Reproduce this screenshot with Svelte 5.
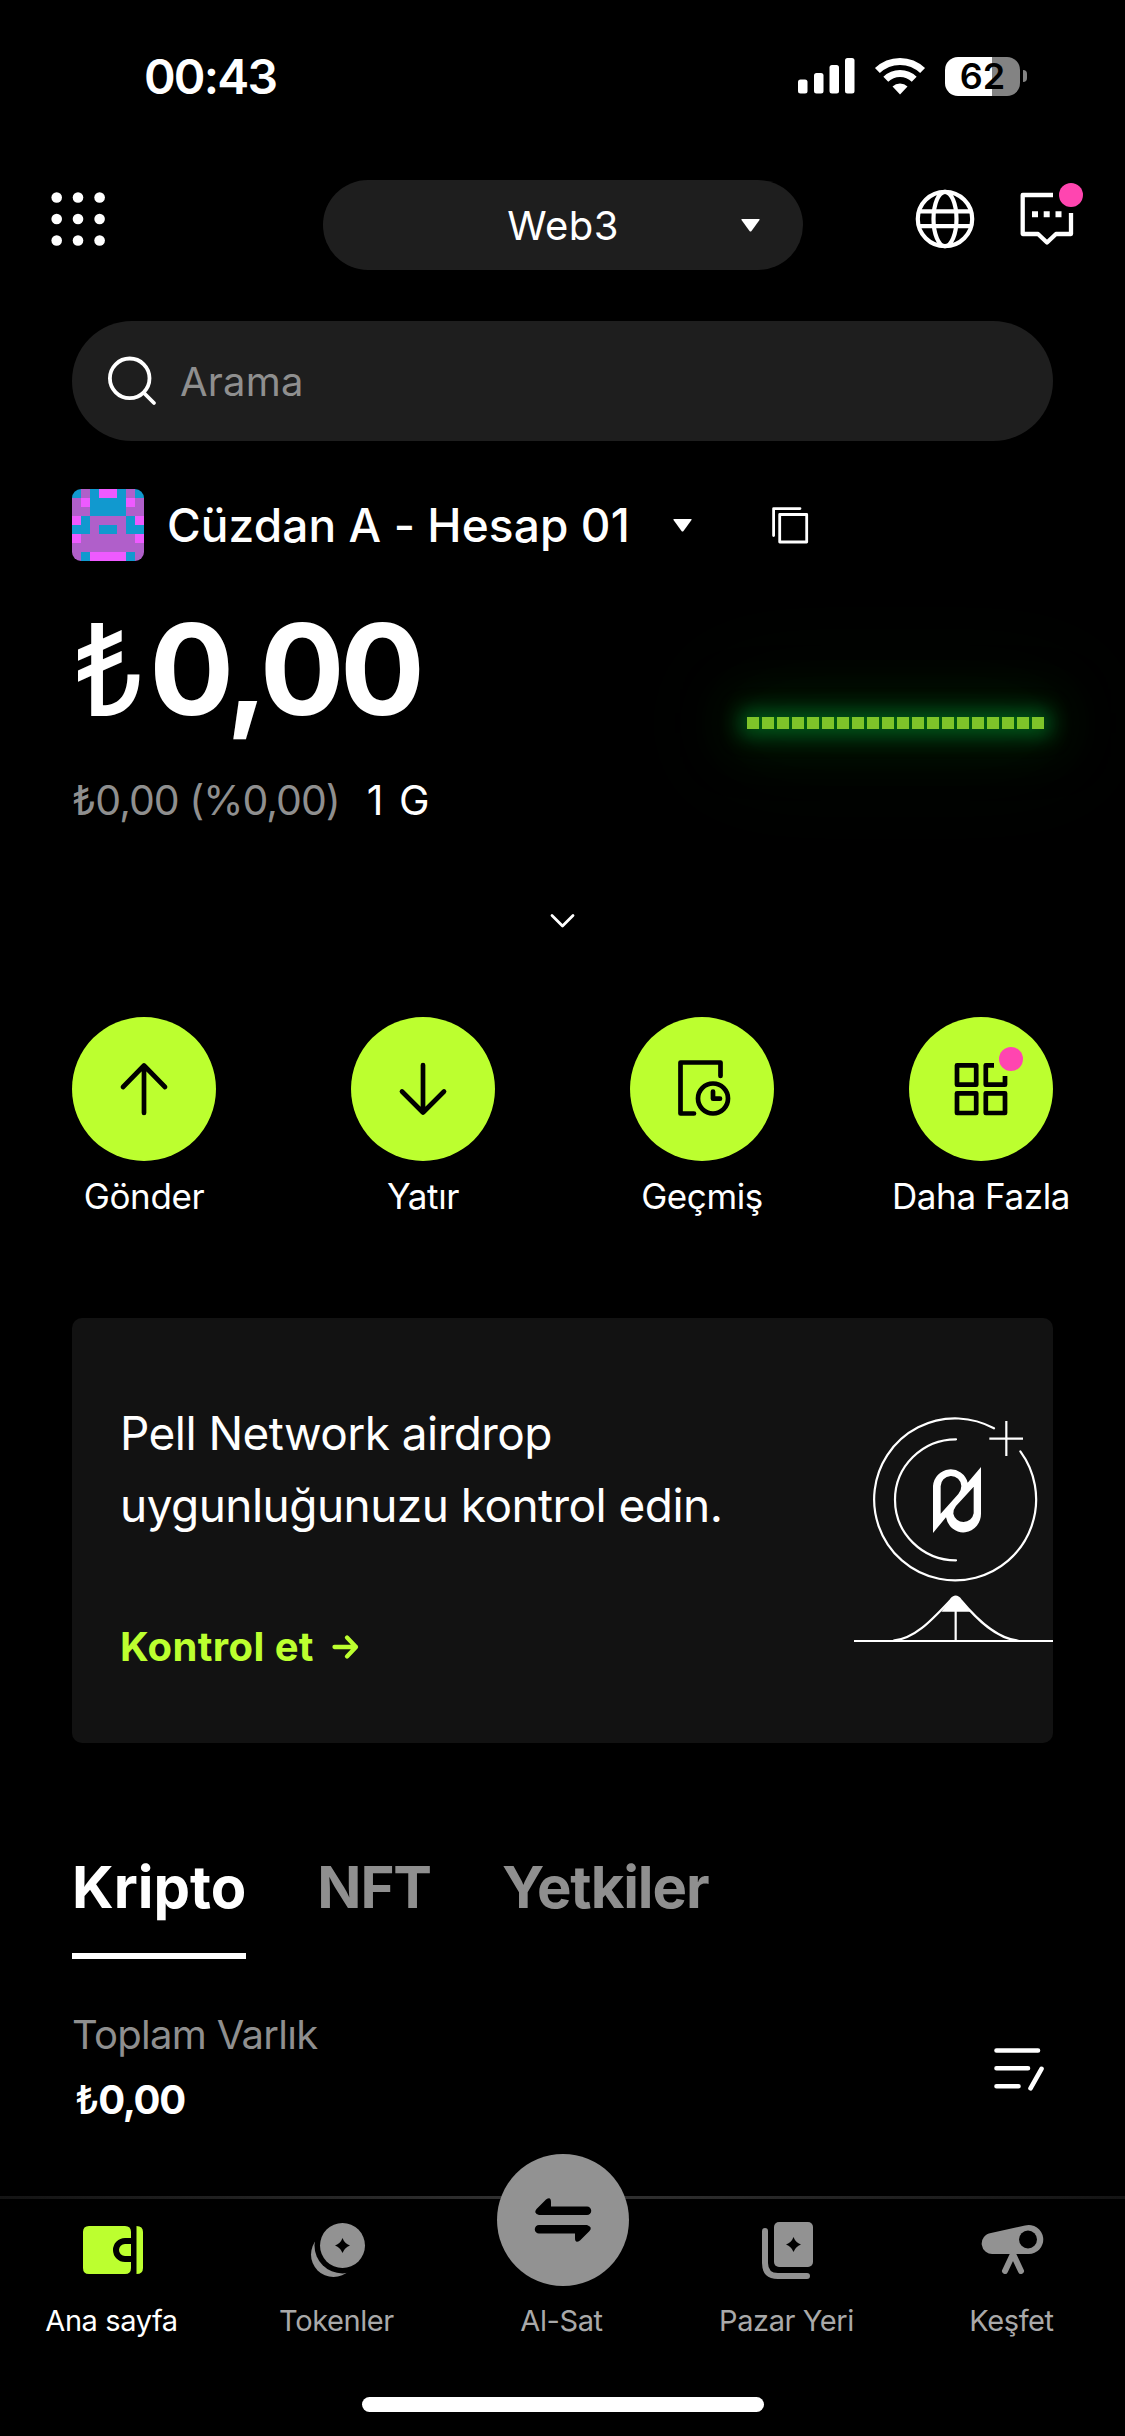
<script lang="ts">
  const avatarRows = [
    'bpbmmbpb',
    'pmbbbbmp',
    'ppbbbbpp',
    'mbppppbm',
    'bbpbbpbb',
    'mppppppm',
    'pppppppp',
    'pbmmmmbp',
  ];
  const avatarColors: Record<string, string> = { b: '#1199cf', p: '#b05fca', m: '#ee5aff' };

  const points = Array.from({ length: 20 }, (_, i) => i);

  const actions = [
    { id: 'send', label: 'Gönder' },
    { id: 'receive', label: 'Yatır' },
    { id: 'history', label: 'Geçmiş' },
    { id: 'more', label: 'Daha Fazla' },
  ];

  const tabs = ['Kripto', 'NFT', 'Yetkiler'];
  let activeTab = $state('Kripto');

  const navItems = [
    { id: 'home', label: 'Ana sayfa' },
    { id: 'tokens', label: 'Tokenler' },
    { id: 'trade', label: 'Al-Sat' },
    { id: 'market', label: 'Pazar Yeri' },
    { id: 'explore', label: 'Keşfet' },
  ];
  let activeNav = $state('home');
</script>

{#snippet caret()}
  <svg class="caret" width="19" height="13" viewBox="0 0 19 13" fill="currentColor">
    <path d="M1 0h17q1 0 .5 1l-8 11q-1 1-2 0l-8-11q-.5-1 .5-1z" />
  </svg>
{/snippet}

{#snippet actionIcon(id: string)}
  <svg width="80" height="80" viewBox="0 0 80 80" fill="none" stroke="#000" stroke-width="4.700" stroke-linecap="round" stroke-linejoin="round">
    {#if id === 'send'}
      <path d="M40 16.500V64M19 38L40 16.500L61 38" />
    {:else if id === 'receive'}
      <path d="M40 16V63.500M19 42.500L40 63.500L61 42.500" />
    {:else if id === 'history'}
      <path d="M58.500 27V13.500H18.500V64.500H32" />
      <circle cx="51" cy="49.500" r="15" />
      <path d="M51 42.500V49.700H58" />
    {:else}
      <path d="M16 16.300H35.200V35.700H16zM16 44.300H35.200V64H16zM44.800 44.300H64V64H44.800z" />
      <path d="M53 16.300H44.800V35.700H64V27" stroke-linecap="butt" />
      <circle cx="70" cy="10" r="12" fill="#ff45b0" stroke="none" />
    {/if}
  </svg>
{/snippet}

{#snippet navIcon(id: string)}
  {#if id === 'home'}
    <svg width="60" height="48" viewBox="0 0 60 48" fill="#bcff2f">
      <path d="M6 0H42Q48 0 48 6V12H42A12 12 0 0 0 42 36H48V42Q48 48 42 48H6Q0 48 0 42V6Q0 0 6 0z" />
      <path d="M48 18V30H42A6 6 0 0 1 42 18zM53.500 0Q60 0 60 6V42Q60 48 53.500 48z" />
    </svg>
  {:else if id === 'tokens'}
    <svg width="54" height="54" viewBox="0 0 54 54" fill="#929292">
      <circle cx="22.500" cy="31.500" r="22.500" />
      <circle cx="31.500" cy="22.500" r="28" fill="#000" />
      <circle cx="31.500" cy="22.500" r="22.500" />
      <path d="M31.500 15Q33.500 20.500 39 22.500Q33.500 24.500 31.500 30Q29.500 24.500 24 22.500Q29.500 20.500 31.500 15z" fill="#000" />
    </svg>
  {:else if id === 'trade'}
    <svg width="56" height="44" viewBox="0 0 56 44" fill="#000">
      <path d="M11 1.500Q16 -2 16 4V8.500H52A4.200 4.200 0 0 1 52 17H4Q-2 15 1.500 11z" />
      <path d="M11 1.500Q16 -2 16 4V8.500H52A4.200 4.200 0 0 1 52 17H4Q-2 15 1.500 11z" transform="rotate(180 28 22)" />
    </svg>
  {:else if id === 'market'}
    <svg width="51" height="57" viewBox="0 0 51 57" fill="#929292">
      <rect x="12" width="39" height="45" rx="5" />
      <path d="M31.500 15Q33.500 20.500 39 22.500Q33.500 24.500 31.500 30Q29.500 24.500 24 22.500Q29.500 20.500 31.500 15z" fill="#000" />
      <path d="M3 9V41Q3 54 16 54H45" fill="none" stroke="#929292" stroke-width="6" stroke-linecap="round" />
    </svg>
  {:else}
    <svg width="60" height="50" viewBox="0 0 60 50" fill="#929292">
      <path d="M10.500 29A10.500 10.500 0 0 1 8 8L42 .5A14.500 14.500 0 1 1 45.500 29z" />
      <circle cx="45" cy="14.500" r="9" fill="#000" />
      <path d="M30 29L22 46M30 29L38 46" stroke="#929292" stroke-width="6" stroke-linecap="round" />
    </svg>
  {/if}
{/snippet}

<div class="screen">
  <div class="status">
    <span class="time">00:43</span>
    <div class="indicators">
      <svg width="57" height="36" viewBox="0 0 57 36" fill="#fff">
        <rect y="21.500" width="9.500" height="14" rx="2.500" />
        <rect x="16" y="15" width="9.500" height="20.500" rx="2.500" />
        <rect x="31.500" y="7" width="9.500" height="28.500" rx="2.500" />
        <rect x="47" width="9.500" height="35.500" rx="2.500" />
      </svg>
      <svg width="52" height="37" viewBox="0 0 52 37" fill="none" stroke="#fff" stroke-width="7">
        <path d="M3.400 12.600A32.500 32.500 0 0 1 48.600 12.600M11.800 21.300A20.400 20.400 0 0 1 40.200 21.300" />
        <path d="M26 36.500L18.500 28.500A11 11 0 0 1 33.500 28.500z" fill="#fff" stroke="none" />
      </svg>
      <div class="battery">
        <span class="battery-body">62</span>
        <span class="battery-cap"></span>
      </div>
    </div>
  </div>

  <header class="top-bar">
    <button class="icon-btn menu" aria-label="Menü">
      <svg width="60" height="60" viewBox="0 0 60 60" fill="#fff">
        {#each [8.7, 30, 51.6] as cx}
          {#each [8.5, 30, 51.5] as cy}
            <circle {cx} {cy} r="5.300" />
          {/each}
        {/each}
      </svg>
    </button>
    <button class="mode">
      <span>Web3</span>
      {@render caret()}
    </button>
    <div class="top-icons">
      <button class="icon-btn globe" aria-label="Ağ">
        <svg width="60" height="60" viewBox="0 0 60 60" fill="none" stroke="#fff" stroke-width="4.200">
          <circle cx="30" cy="30" r="27.200" />
          <ellipse cx="30" cy="30" rx="11.500" ry="27.200" />
          <path d="M4 22.300H56M4 37.200H56" />
        </svg>
      </button>
      <button class="icon-btn" aria-label="Mesajlar">
        <svg width="74" height="72" viewBox="0 0 74 72" fill="none" stroke="#fff" stroke-width="4.300" stroke-linejoin="round">
          <path d="M39 15H8.700V54H24L33 62.500L42 54H57V33" />
          <path d="M18 34.200H24M29.700 34.200H35.700M41.500 34.200H47.500" stroke-width="6" />
          <circle cx="57" cy="15" r="12" fill="#ff45b0" stroke="none" />
        </svg>
      </button>
    </div>
  </header>

  <main>
    <div class="search">
      <svg width="50" height="50" viewBox="0 0 50 50" fill="none" stroke="#fff" stroke-width="3.800" stroke-linecap="round">
        <circle cx="22.700" cy="22.300" r="19.800" />
        <path d="M37 37L47 47" />
      </svg>
      <span>Arama</span>
    </div>

    <div class="account">
      <svg class="avatar" width="72" height="72" viewBox="0 0 8 8" shape-rendering="crispEdges">
        {#each avatarRows as row, y}
          {#each row.split('') as cell, x}
            <rect {x} {y} width="1" height="1" fill={avatarColors[cell]} />
          {/each}
        {/each}
      </svg>
      <span class="account-name">Cüzdan A - Hesap 01</span>
      {@render caret()}
      <button class="icon-btn copy" aria-label="Kopyala">
        <svg width="37" height="37" viewBox="0 0 37 37" fill="none" stroke="#fff" stroke-width="2.800" stroke-linecap="round" stroke-linejoin="round">
          <rect x="7.700" y="7.500" width="27" height="27.500" />
          <path d="M28 1.600H1.600V28.500" />
        </svg>
      </button>
    </div>

    <section class="portfolio">
      <div>
        <div class="balance"><span class="lira">₺</span>0,00</div>
        <div class="change">
          <span class="muted">₺0,00 (%0,00)</span>
          <span class="period">1 G</span>
        </div>
      </div>
      <div class="sparkline">
        {#each points as point (point)}
          <span></span>
        {/each}
      </div>
    </section>

    <svg class="expand" width="24" height="14" viewBox="0 0 24 14" fill="none" stroke="#fff" stroke-width="2.800" stroke-linecap="round" stroke-linejoin="round">
      <path d="M1 1.500L11.500 12L22 1.500" />
    </svg>

    <section class="actions">
      {#each actions as action (action.id)}
        <button class="action">
          <span class="action-circle">{@render actionIcon(action.id)}</span>
          <span class="action-label">{action.label}</span>
        </button>
      {/each}
    </section>

    <section class="card">
      <div class="card-text">
        <p>Pell Network airdrop<br />uygunluğunuzu kontrol edin.</p>
        <div class="card-link">
          <span>Kontrol et</span>
          <svg width="27" height="24" viewBox="0 0 27 24" fill="none" stroke="currentColor" stroke-width="4.300" stroke-linecap="round" stroke-linejoin="round">
            <path d="M2.500 12H24M15 2.500L24 12L15 21.500" />
          </svg>
        </div>
      </div>
      <svg class="card-art" width="199" height="228" viewBox="162 108 597 684" fill="none" stroke="#fff" stroke-width="6.600">
        <path d="M661 214A243 243 0 1 1 582 145" stroke-linecap="round" />
        <path d="M468 541A183 181.500 0 0 1 468 178" stroke-linecap="round" />
        <path d="M568 176H669M619 123V228M162 783H759M467 690V783" />
        <path d="M280 782C345 776 395 720 452 660Q467 640 482 660C532 720 590 776 655 782" />
        <path d="M424 695L456 655Q467 642 478 655L511 695z" fill="#fff" stroke="none" />
        <path
          d="M399 459V318A53 54 0 0 1 503 308L543 261V400A53 56 0 0 1 438 412zM422 401L475 342Q484 331 484 318A31 31 0 0 0 422 320zM521 320L468 378Q460 388 460 401A31 31 0 0 0 521 400z"
          fill="#fff"
          fill-rule="evenodd"
          stroke="none"
        />
      </svg>
    </section>

    <div class="tabs">
      {#each tabs as tab (tab)}
        <button class="tab" class:active={tab === activeTab} onclick={() => (activeTab = tab)}>{tab}</button>
      {/each}
    </div>

    <section class="assets">
      <div>
        <div class="assets-label">Toplam Varlık</div>
        <div class="assets-value"><span class="lira">₺</span>0,00</div>
      </div>
      <button class="icon-btn" aria-label="Düzenle">
        <svg width="50" height="44" viewBox="0 0 50 44" fill="none" stroke="#fff" stroke-width="4.600" stroke-linecap="round">
          <path d="M2.500 4.500H44M2.500 22.300H34M2.500 40.200H24.500M47.500 22.800L36.500 42.300" />
        </svg>
      </button>
    </section>
  </main>

  <nav>
    <div class="nav-items">
      {#each navItems as item (item.id)}
        <button class="nav-item" class:active={item.id === activeNav} onclick={() => (activeNav = item.id)}>
          <span class="nav-icon" class:trade={item.id === 'trade'}>{@render navIcon(item.id)}</span>
          <span class="nav-label">{item.label}</span>
        </button>
      {/each}
    </div>
    <div class="home-indicator"></div>
  </nav>
</div>

<style>
  :global(body) {
    margin: 0;
    background: #000;
  }

  .screen {
    display: flex;
    flex-direction: column;
    width: 1125px;
    height: 2436px;
    overflow: hidden;
    background: #000;
    color: #fff;
    font-family: Inter, "Liberation Sans", sans-serif;
  }

  button {
    padding: 0;
    border: none;
    background: none;
    color: inherit;
    font: inherit;
  }

  svg {
    display: block;
    flex-shrink: 0;
    overflow: visible;
  }

  .icon-btn {
    display: block;
  }

  .status {
    display: flex;
    justify-content: space-between;
    align-items: center;
    height: 60px;
    padding: 46px 98px 0 144px;
  }

  .time {
    font-size: 48px;
    font-weight: 600;
    letter-spacing: -1.8px;
  }

  .indicators {
    display: flex;
    align-items: center;
    gap: 19px;
  }

  .battery {
    display: flex;
    align-items: center;
    gap: 3px;
  }

  .battery-body {
    width: 75px;
    height: 39px;
    border-radius: 13px;
    background: linear-gradient(90deg, #fff 63%, #838383 63%);
    color: #000;
    font-size: 36px;
    font-weight: 600;
    line-height: 39px;
    text-align: center;
  }

  .battery-cap {
    width: 4px;
    height: 12px;
    border-radius: 0 6px 6px 0;
    background: #838383;
  }

  .top-bar {
    display: grid;
    grid-template-columns: 275px 480px 1fr;
    align-items: start;
    height: 90px;
    margin-top: 74px;
    padding-left: 48px;
  }

  .menu {
    margin-top: 9px;
  }

  .mode {
    display: grid;
    grid-template-columns: 1fr auto 1fr;
    align-items: center;
    height: 90px;
    padding: 0 43px;
    border-radius: 45px;
    background: #1e1e1e;
    font-size: 40px;
  }

  .mode span {
    grid-column: 2;
    letter-spacing: 0.4px;
  }

  .mode :global(.caret) {
    justify-self: end;
  }

  .top-icons {
    display: flex;
    align-items: flex-start;
    gap: 39px;
    padding-left: 112px;
  }

  .globe {
    margin-top: 9px;
  }

  main {
    display: flex;
    flex-direction: column;
    padding: 51px 72px 0;
  }

  .search {
    display: flex;
    align-items: center;
    gap: 23px;
    height: 120px;
    padding-left: 35px;
    border-radius: 60px;
    background: #1e1e1e;
    color: #8f8f8f;
    font-size: 40px;
    letter-spacing: 0.2px;
  }

  .account {
    display: flex;
    align-items: center;
    height: 72px;
    margin-top: 48px;
  }

  .avatar {
    overflow: hidden;
    border-radius: 9px;
  }

  .account-name {
    width: 506px;
    padding-left: 23px;
    font-size: 46px;
    font-weight: 500;
    letter-spacing: 0.1px;
    white-space: nowrap;
  }

  .copy {
    margin-left: 80px;
  }

  .portfolio {
    display: flex;
    justify-content: space-between;
    margin-top: 48px;
    padding-right: 9px;
  }

  .balance {
    font-size: 126px;
    font-weight: 700;
    letter-spacing: -4.6px;
    line-height: 120px;
  }

  .lira {
    font-weight: 400;
  }

  .balance .lira {
    margin-right: 7px;
  }

  .change {
    display: flex;
    gap: 27px;
    margin-top: 41px;
    font-size: 41px;
    line-height: 60px;
  }

  .muted {
    color: #8f8f8f;
    letter-spacing: -1px;
  }

  .period {
    letter-spacing: 1px;
    word-spacing: 2px;
  }

  .sparkline {
    display: flex;
    gap: 3px;
    height: 12px;
    margin-top: 108px;
    background: #005a10;
    box-shadow: 0 0 20px 6px #005c1c, 0 0 50px 12px rgba(0, 64, 14, 0.5), 0 0 110px 36px rgba(0, 40, 4, 0.3);
  }

  .sparkline span {
    width: 12px;
    background: #7ec429;
  }

  .expand {
    margin: 84px auto 0;
  }

  .actions {
    display: flex;
    justify-content: space-between;
    margin-top: 89px;
  }

  .action {
    display: flex;
    flex-direction: column;
    align-items: center;
    width: 144px;
  }

  .action-circle {
    display: grid;
    place-items: center;
    width: 144px;
    height: 144px;
    border-radius: 50%;
    background: #bcff2f;
  }

  .action-label {
    margin-top: 13px;
    font-size: 35px;
    letter-spacing: -0.4px;
    line-height: 44px;
    white-space: nowrap;
  }

  .card {
    display: flex;
    justify-content: space-between;
    height: 425px;
    margin-top: 100px;
    border-radius: 10px;
    background: #121212;
  }

  .card-text {
    padding: 79px 0 0 48px;
  }

  .card p {
    margin: 0;
    font-size: 46px;
    letter-spacing: -0.55px;
    line-height: 72px;
    white-space: nowrap;
  }

  .card-link {
    display: flex;
    align-items: center;
    gap: 18px;
    margin-top: 76px;
    color: #bcff2f;
    font-size: 40px;
    font-weight: 700;
    letter-spacing: 0.4px;
    line-height: 60px;
  }

  .card-art {
    margin-top: 98px;
  }

  .tabs {
    display: flex;
    gap: 71px;
    margin-top: 109px;
  }

  .tab {
    padding-bottom: 31px;
    border-bottom: 6px solid transparent;
    color: #8f8f8f;
    font-size: 58px;
    font-weight: 700;
    letter-spacing: -1.1px;
    line-height: 70px;
  }

  .tab.active {
    border-color: #fff;
    color: #fff;
    letter-spacing: 0;
  }

  .assets {
    display: flex;
    justify-content: space-between;
    align-items: center;
    margin-top: 46px;
    padding-right: 9px;
    font-size: 40px;
    line-height: 60px;
  }

  .assets-label {
    color: #8f8f8f;
    letter-spacing: -0.7px;
  }

  .assets-value {
    margin-top: 5px;
    padding-left: 3px;
    font-weight: 700;
    letter-spacing: -1.3px;
  }

  .assets-value .lira {
    font-weight: 500;
  }

  nav {
    display: flex;
    flex-direction: column;
    margin-top: auto;
    height: 240px;
  }

  .nav-items {
    display: grid;
    grid-template-columns: repeat(5, 225px);
    height: 201px;
    background: linear-gradient(90deg, #141414, #333 50%, #141414) top / 100% 3px no-repeat;
  }

  .nav-item {
    display: flex;
    flex-direction: column;
    align-items: center;
    justify-content: flex-start;
    color: #a9a9a9;
  }

  .nav-item.active {
    color: #fff;
  }

  .nav-icon {
    display: grid;
    place-items: center;
    width: 132px;
    height: 108px;
  }

  .nav-icon.trade {
    height: 132px;
    margin: -42px 0 18px;
    border-radius: 50%;
    background: #929292;
  }

  .nav-label {
    margin-top: -2px;
    padding-right: 2px;
    font-size: 29px;
    letter-spacing: -0.4px;
    line-height: 38px;
  }

  .home-indicator {
    width: 402px;
    height: 15px;
    margin: 0 auto;
    border-radius: 8px;
    background: #fff;
  }
</style>
